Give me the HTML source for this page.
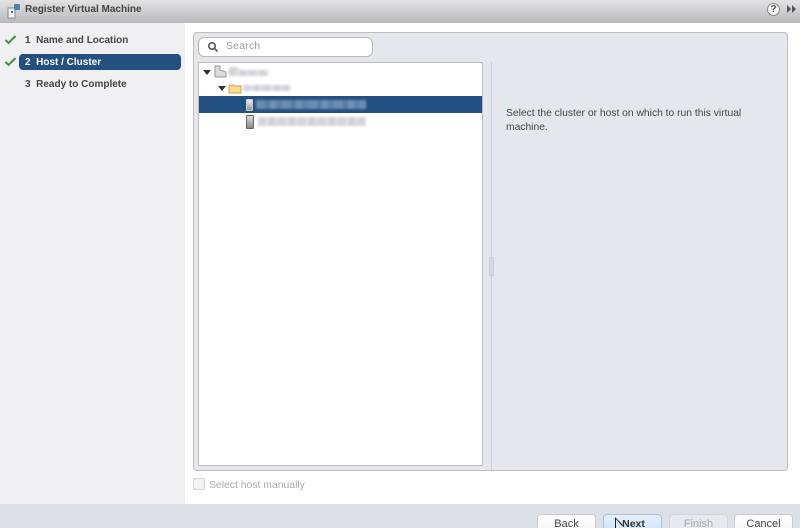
<!DOCTYPE html>
<html style="height:528px;overflow:hidden"><head><meta charset="utf-8"><style>
html,body{margin:0;padding:0;background:#fff}
body{width:800px;height:528px;overflow:hidden;position:relative;font-family:"Liberation Sans",sans-serif}
div,span{position:absolute;box-sizing:border-box}
#w{left:0;top:0;width:800px;height:528px;overflow:hidden;filter:blur(.35px)}
.t{white-space:nowrap;color:#444;font-size:10px;font-weight:bold;line-height:14px}
.b{height:6px;filter:blur(1.2px)}
.g{background:repeating-linear-gradient(90deg,#d4d4da 0 7px,#dedee2 7px 11px,#cfcfd6 11px 16px,#dadade 16px 20px)}
.h{background:repeating-linear-gradient(90deg,#6f8db2 0 9px,#5a7da7 9px 14px,#7592b6 14px 20px,#5f82ab 20px 26px)}
.btn{top:514px;width:59px;height:24px;border:1px solid #c8ccd2;border-radius:4px;background:linear-gradient(#fff,#f1f1f3);text-align:center;font-size:11px;line-height:18px;color:#444}
</style></head><body>
<div id="w">
<div style="left:0;top:0;width:800px;height:23px;background:linear-gradient(#e2e2e3,#b9babc)"></div>
<div style="left:0;top:23px;width:185px;height:481px;background:#f0f0f3"></div>
<svg style="position:absolute;left:6px;top:2px" width="16" height="18" viewBox="0 0 16 18"><rect x="2" y="6" width="7" height="10" fill="#f3f4f6" stroke="#7d8a9c"/><rect x="8" y="2" width="6" height="6" rx="1" fill="#4f7fb0"/><rect x="5" y="9" width="2" height="2" fill="#4f7fb0"/></svg>
<div class="t" style="left:25px;top:3px;color:#444">Register Virtual Machine</div>
<div style="left:767px;top:3px;width:13px;height:13px;border-radius:50%;background:#f4f4f4;border:1px solid #888;color:#555;font-size:10px;font-weight:bold;line-height:11px;text-align:center">?</div>
<svg style="position:absolute;left:786px;top:4px" width="11" height="10"><path d="M1 1l4 4-4 4zM6 1l4 4-4 4z" fill="#555"/></svg>

<svg style="position:absolute;left:4px;top:34px" width="14" height="34" fill="none" stroke="#3c963c" stroke-width="2"><path d="M1.500 6l3 3 7-7"/><path d="M1.500 28l3 3 7-7"/></svg>
<div class="t" style="left:25px;top:34px">1&nbsp; Name and Location</div>
<div style="left:19px;top:54px;width:162px;height:16px;background:#234f81;border-radius:4px"></div>
<div class="t" style="left:25px;top:56px;color:#fff">2&nbsp; Host / Cluster</div>
<div class="t" style="left:25px;top:78px">3&nbsp; Ready to Complete</div>

<div style="left:193px;top:32px;width:595px;height:439px;background:#e6e7ec;border:1px solid #bdbdc0;border-radius:4px"></div>
<div style="left:198px;top:37px;width:175px;height:20px;background:#fff;border:1px solid #b8b8bc;border-radius:6px"></div>
<svg style="position:absolute;left:207px;top:41px" width="12" height="12" fill="none" stroke="#555" stroke-width="1.600"><circle cx="5" cy="5" r="3.200"/><path d="M7.500 7.500l3 3"/></svg>
<div style="left:226px;top:40px;font-size:10.300px;line-height:14px;color:#999;letter-spacing:.3px">Search</div>

<div style="left:198px;top:62px;width:285px;height:404px;background:#fff;border:1px solid #bcbcc0"></div>
<div style="left:199px;top:96px;width:283px;height:17px;background:#234f81"></div>
<div style="left:491px;top:62px;width:1px;height:408px;background:#c9cde6"></div>
<div style="left:489px;top:257px;width:5px;height:19px;background:#d5d8e0;border:1px solid #c9ccd8"></div>

<svg style="position:absolute;left:203px;top:70px" width="8" height="5"><path d="M0 0h8l-4 5z" fill="#333"/></svg>
<svg style="position:absolute;left:214px;top:65px" width="13" height="13"><path d="M1 12V1h5v4l6 2v5z" fill="#dcdcdc" stroke="#999"/></svg>
<div class="b g" style="left:229px;top:67px;width:10px"></div>
<div class="b g" style="left:229px;top:70px;width:39px"></div>
<svg style="position:absolute;left:218px;top:86px" width="8" height="5"><path d="M0 0h8l-4 5z" fill="#333"/></svg>
<svg style="position:absolute;left:228px;top:83px" width="14" height="11"><path d="M1 2h4l1 1h7v7H1z" fill="#fbdc90" stroke="#c9a24e"/></svg>
<div class="b g" style="left:243px;top:85px;width:47px"></div>

<div style="left:246px;top:99px;width:7px;height:12px;background:linear-gradient(#eee,#999);border:1px solid #ccc;border-radius:1px"></div>
<div class="b h" style="left:256px;top:100px;width:110px;height:9px"></div>
<div style="left:246px;top:115px;width:8px;height:14px;background:linear-gradient(#ddd,#888);border:1px solid #666;border-radius:1px"></div>
<div class="b g" style="left:258px;top:117px;width:108px;height:9px"></div>

<div style="left:506px;top:107px;width:260px;font-size:10.300px;line-height:14px;color:#444">Select the cluster or host on which to run this virtual machine.</div>

<div style="left:193px;top:478px;width:12px;height:12px;background:#f4f4f6;border:1px solid #d2d2d4;border-radius:2px"></div>
<div style="left:209px;top:479px;font-size:10.400px;line-height:14px;color:#aaa;white-space:nowrap">Select host manually</div>

<div style="left:0;top:504px;width:800px;height:24px;background:#dde0e6"></div>
<div class="btn" style="left:537px">Back</div>
<div class="btn" style="left:603px;background:linear-gradient(#e4f0fb,#c8e0f8);border-color:#a9c4dd;font-weight:bold;color:#333;font-size:10.500px;padding-left:2px">Next</div>
<div class="btn" style="left:669px;color:#aaa;background:#e8e9ed;border-color:#d2d4d9">Finish</div>
<div class="btn" style="left:734px">Cancel</div>
<svg style="position:absolute;left:614px;top:517px" width="10" height="11"><path d="M1 0v11h1V2l6 7 1-1z" fill="#222"/></svg>
</div>
</body></html>
